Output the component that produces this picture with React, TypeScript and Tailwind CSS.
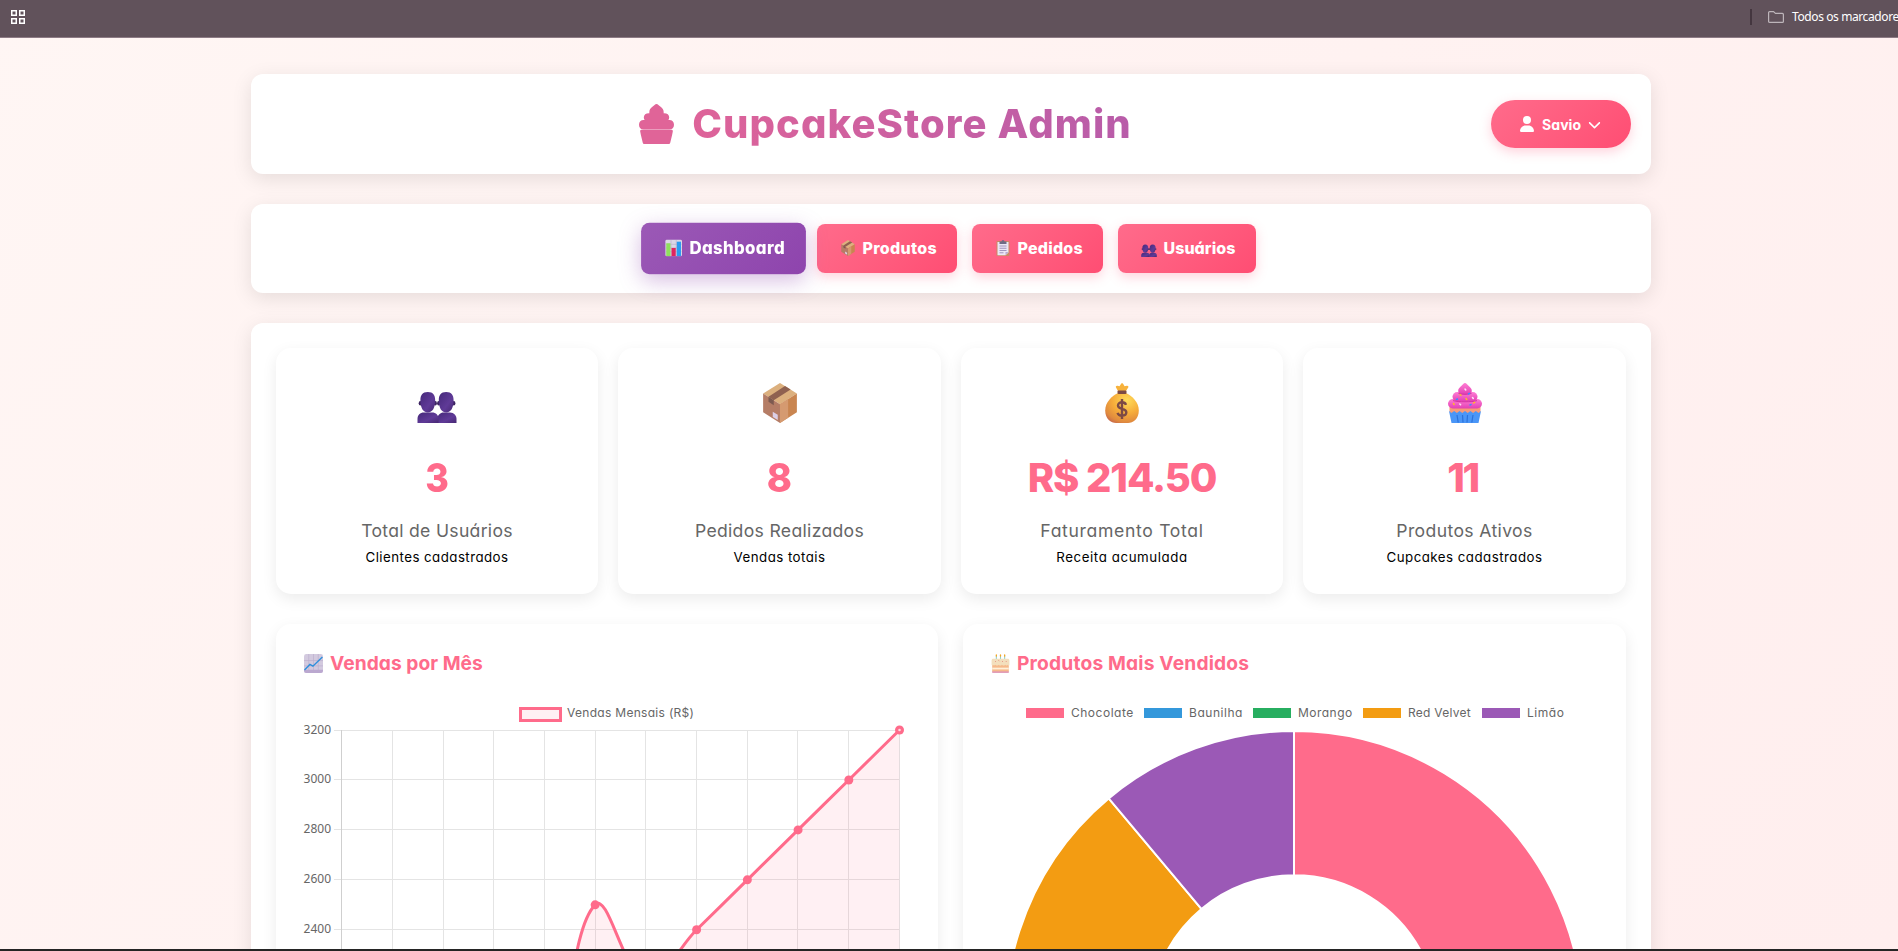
import type { ReactNode } from "react";
import { FaUser, FaChevronDown } from "react-icons/fa6";

type IconProps = { className?: string };

function ChartBars({ className }: IconProps) {
  return (
    <svg viewBox="0 0 32 32" className={className}>
      <rect x="0" y="0" width="32" height="32" rx="3" fill="#dcd7e6" />
      <path d="M1 9h30M1 16h30M1 23h30M11 1v30M21 1v30" stroke="#b9b0c9" strokeWidth="1.2" />
      <rect x="2" y="7" width="8" height="25" fill="#8fe05c" />
      <rect x="12" y="16" width="8" height="16" fill="#e0245e" />
      <rect x="22" y="4" width="8" height="28" fill="#2b9bf0" />
    </svg>
  );
}

function Package({ className }: IconProps) {
  return (
    <svg viewBox="0 0 32 32" className={className}>
      <path d="M16 0 29.500 8.300 16 17 2.500 8.300Z" fill="#dcb07e" />
      <path d="M2.500 8.300 16 17v15L2.500 23.400Z" fill="#b57d66" />
      <path d="M29.500 8.300 16 17v15l13.500-8.600Z" fill="#c98550" />
      <path d="M16 17l6.500-4.200v15L16 32Z" fill="#d59a70" />
      <path d="M20 2.400 24.500 5.200 11 13.700 6.800 11Z" fill="#8f6150" />
      <path d="M6.800 11 11 13.700v4L6.800 15Z" fill="#7d5a50" />
      <path d="M10.200 23l4 2.300v4.200l-4-2.300Z" fill="#dccfe6" />
    </svg>
  );
}

function Clipboard({ className }: IconProps) {
  return (
    <svg viewBox="0 0 32 32" className={className}>
      <rect x="3" y="2" width="26" height="30" rx="2" fill="#c98a63" />
      <path d="M5 4h22v21l-6 5.500H5Z" fill="#ece6f5" />
      <path d="M27 24h-6v6Z" fill="#b9a9cf" />
      <path d="M9 12h14M9 16.500h14M9 21h14M9 25.500h8" stroke="#9a8cb8" strokeWidth="1.8" />
      <path d="M9 3h4a3 3 0 0 1 6 0h4v5H9Z" fill="#6f6a86" />
    </svg>
  );
}

function People({ className }: IconProps) {
  return (
    <svg viewBox="0 0 40 40" className={className}>
      <defs>
        <linearGradient id="people" x1="0" y1="0" x2="1" y2="1">
          <stop offset="0" stopColor="#46297a" />
          <stop offset=".6" stopColor="#5f3a97" />
          <stop offset="1" stopColor="#472873" />
        </linearGradient>
      </defs>
      <g fill="#3d2462">
        <ellipse cx="3.300" cy="20.300" rx="1.600" ry="2.300" />
        <ellipse cx="18.300" cy="20.300" rx="1.600" ry="2.300" />
        <ellipse cx="21.700" cy="20.300" rx="1.600" ry="2.300" />
        <ellipse cx="36.800" cy="20.300" rx="1.600" ry="2.300" />
      </g>
      <g fill="url(#people)">
        <path d="M10.800 9c5.400 0 7.400 3 7.400 8.500 0 7-2.600 12-7.400 12s-7.400-5-7.400-12C3.400 12 5.400 9 10.800 9Z" />
        <path d="M29.200 9c5.400 0 7.400 3 7.400 8.500 0 7-2.600 12-7.400 12s-7.400-5-7.400-12C21.800 12 23.800 9 29.200 9Z" />
        <path d="M20.500 40v-5c0-3 3-5.500 6-5.500h6.500c4 0 6.500 3 6.500 6.500v4Z" />
        <path d="M.5 40v-4c0-4 2.500-6.500 6.500-6.500h8c4 0 6.500 2.500 6.500 6.500v4Z" />
      </g>
    </svg>
  );
}

function MoneyBag({ className }: IconProps) {
  return (
    <svg viewBox="0 0 40 40" className={className}>
      <defs>
        <radialGradient id="bag" cx=".65" cy=".25" r=".85">
          <stop offset="0" stopColor="#ffdc5a" />
          <stop offset=".5" stopColor="#f6ac3a" />
          <stop offset=".85" stopColor="#e08a3e" />
          <stop offset="1" stopColor="#c96a48" />
        </radialGradient>
      </defs>
      <path d="M16 8 14 4.500c-.6-1.200.4-2 1.500-1.700l2 .5L19.300.6c.4-.6 1.200-.6 1.600 0l1.700 2.700 2.300-.5c1.200-.2 1.900.8 1.300 1.800L24 8Z" fill="#f7b23c" />
      <path d="M16 10h8c6 3 12.800 9 12.800 17.500C36.800 36 31 40 26 40H14C9 40 3.200 36 3.200 27.500 3.200 19 10 13 16 10Z" fill="url(#bag)" />
      <rect x="15.500" y="7.500" width="9" height="3.600" rx="1" fill="#7c4a45" />
      <path d="M24 21.800c-.6-1.700-2.100-2.500-4-2.500-2.300 0-4 1.100-4 3.200 0 4.400 8.300 2.200 8.300 6.700 0 2.200-1.900 3.400-4.300 3.400-2.200 0-3.900-.9-4.500-2.800M20 16v20" stroke="#7c4a45" strokeWidth="2.400" fill="none" />
    </svg>
  );
}

function Cupcake({ className }: IconProps) {
  return (
    <svg viewBox="0 0 40 40" className={className}>
      <defs>
        <linearGradient id="frost" x1="0" y1="0" x2="0" y2="1">
          <stop offset="0" stopColor="#ff7ed4" />
          <stop offset="1" stopColor="#e23fb4" />
        </linearGradient>
      </defs>
      <path d="M4.500 24h31v5l-3 2h-25l-3-2Z" fill="#f79a78" />
      <path d="m4 28 2.500 2 2.700-2 2.700 2 2.700-2 2.700 2L20 28l2.700 2 2.700-2 2.700 2 2.700-2 2.700 2 2.500-2-2.500 12H6.500Z" fill="#4a96f7" />
      <path d="m12 32 1.200 7.500M17.500 32l.5 7.500M22.500 32l-.5 7.500M28 32l-1.200 7.500" stroke="#2b72dc" strokeWidth="1.200" />
      <g fill="url(#frost)">
        <rect x="3" y="16" width="34" height="9.500" rx="4.750" />
        <rect x="7.500" y="9" width="25" height="9.500" rx="4.700" />
        <path d="M20 0c1.500 0 2 1.500 3.500 2.800 2 1.700 3.300 3 3.300 5 0 2.500-3 3.700-6.800 3.700s-6.800-1.200-6.800-3.700c0-2 1.300-3.300 3.300-5C18 1.500 18.500 0 20 0Z" />
      </g>
      <path d="M8 17.600c5 1.600 19 1.600 24 0M13.500 10.400c3 1.200 10 1.200 13 0" stroke="#cf2fa0" strokeWidth=".9" fill="none" />
      <g strokeWidth="1.500" strokeLinecap="round">
        <path d="m15 11.500 1 .8M28.500 20l1.200-.6M8.500 20.500l.6 1M21 15.500l.8 1" stroke="#ffb52e" />
        <path d="m23.500 11 1-.6M11.500 16.500l1-.5M25 22l1-.4" stroke="#3d8bff" />
        <path d="m20 6 .8 1M14.800 21l.8.8M27.500 14.500l.8 1" stroke="#ffe1f6" />
      </g>
    </svg>
  );
}

function TrendUp({ className }: IconProps) {
  return (
    <svg viewBox="0 0 32 32" className={className}>
      <rect x="0" y="0" width="32" height="32" rx="4" fill="#d3cadf" />
      <path d="M0 28a4 4 0 0 0 4 4h24a4 4 0 0 0 4-4v-1.500H0Z" fill="#bba8d0" />
      <path d="M0 11h32M0 20h32M8 0v32M16 0v32M24 0v32" stroke="#b9adcb" strokeWidth="1" />
      <path d="M.8 27 10 17.500l5 3L31 5" fill="none" stroke="#2f8fdc" strokeWidth="2.400" />
    </svg>
  );
}

function Cake({ className }: IconProps) {
  return (
    <svg viewBox="0 0 32 32" className={className}>
      <path d="M9 3v7M16 3v7M23 3v7" stroke="#8fcfc6" strokeWidth="1.800" />
      <path d="M9 1.500v2M16 1.500v2M23 1.500v2" stroke="#f5a623" strokeWidth="2.200" strokeLinecap="round" />
      <rect x="2" y="15" width="28" height="16.500" rx="2" fill="#f6b98b" />
      <path d="M2 23h28v3H2Z" fill="#fff0d9" />
      <path d="M2 29.500h28v2H2Z" fill="#d98cc0" />
      <path d="M1 11c0-2 1-3 3-3h24c2 0 3 1 3 3v7c0 2-2 2-2.500 0-.5 1.800-4 1.800-4.500 0-.5 1.800-5 1.800-5.500 0-.5 1.800-5 1.800-5.500 0-.5 1.800-5 1.800-5.500 0-.5 1.500-6.500 1.500-6.500 0Z" fill="#f3dfbd" />
      <path d="m7 12 1 1M13 11l1 1M19 13l1-1M25 12l1 1" stroke="#e0605c" strokeWidth="1.500" />
    </svg>
  );
}

function CupcakeSilhouette({ className }: IconProps) {
  return (
    <svg viewBox="0 0 35 40" className={className} fill="#e06498">
      <path d="M17.500 0c1.500 0 2.400 1.500 3.800 2.600 2.200 1.700 3.400 3.200 3.400 5.600 0 .4 0 .7-.1 1h.6c3 0 5 1.600 5 4.200 0 1-.3 1.800-.8 2.500h.9c2.900 0 4.700 1.900 4.700 4.800 0 2.800-1.800 4.700-4.700 4.900H4.700C1.800 25.400 0 23.500 0 20.700c0-2.900 1.800-4.800 4.700-4.800h.9c-.5-.7-.8-1.500-.8-2.500 0-2.600 2-4.200 5-4.200h.6c-.1-.3-.1-.6-.1-1 0-2.400 1.200-3.900 3.400-5.600C15.100 1.500 16 0 17.500 0Z" />
      <path d="M2.400 25.700h30.200c.9 0 1.400.8 1.200 1.700l-.7 3.600-1.800 7.500c-.2 1-.9 1.500-1.900 1.500H5.600c-1 0-1.700-.5-1.900-1.500L1.900 31l-.7-3.600c-.2-.9.300-1.700 1.200-1.700Z" />
    </svg>
  );
}

const panel = "bg-white rounded-xl shadow-[0_5px_20px_rgba(0,0,0,0.1)]";
const card = "bg-white rounded-[15px] shadow-[0_5px_15px_rgba(0,0,0,0.08)]";

function BookmarksBar() {
  return (
    <div className="h-[38px] shrink-0 bg-[#61525b] border-b border-[#8d7b85] flex items-start overflow-hidden">
      <svg viewBox="0 0 14 14" className="w-3.5 h-3.5 ml-[11px] mt-2.5" fill="none" stroke="#fff" strokeWidth="1.500">
        <rect x=".75" y=".75" width="4.500" height="4.500" />
        <rect x="8.750" y=".75" width="4.500" height="4.500" />
        <rect x=".75" y="8.750" width="4.500" height="4.500" />
        <rect x="8.750" y="8.750" width="4.500" height="4.500" />
      </svg>
      <div className="ml-auto w-[148px] flex items-start whitespace-nowrap">
        <div className="w-0.5 h-4 mt-[9px] bg-[#44363f] shrink-0" />
        <svg viewBox="0 0 16 12" className="w-4 h-3 ml-4 mt-[11px] shrink-0" fill="none" stroke="#bdb5ba" strokeWidth="1.200" strokeLinejoin="round">
          <path d="M.6 10.400V1.600c0-.6.4-1 1-1h4l1.800 1.800h7c.6 0 1 .4 1 1v7c0 .6-.4 1-1 1H1.600c-.6 0-1-.4-1-1Z" />
        </svg>
        <span className="ml-2 mt-[7px] leading-5 text-[12px] text-white font-['Noto_Sans',sans-serif] tracking-[-0.4px]">Todos os marcadore</span>
      </div>
    </div>
  );
}

function NavButton({ icon, width, active, children }: { icon: ReactNode; width: string; active?: boolean; children: ReactNode }) {
  const look = active
    ? "scale-105 bg-linear-135 from-[#9b59b6] to-[#8e44ad] shadow-[0_6px_20px_rgba(155,89,182,0.4)]"
    : "bg-linear-135 from-[#ff6b8b] to-[#ff4d73] shadow-[0_4px_12px_rgba(255,107,139,0.3)]";
  return (
    <button className={`${width} ${look} h-[49px] pb-px rounded-lg pl-[23px] flex items-center gap-[7px] text-white text-[16px] font-extrabold whitespace-nowrap`}>
      {icon}
      {children}
    </button>
  );
}

function StatCard({ icon, value, label, note }: { icon: ReactNode; value: ReactNode; label: ReactNode; note: ReactNode }) {
  return (
    <div className={`${card} h-[246px] pt-[35px] flex flex-col items-center whitespace-nowrap`}>
      {icon}
      <div className="mt-[25px] h-[60px] leading-[60px] text-[40px] font-extrabold text-[#ff6b8b]">{value}</div>
      <div className="mt-2.5 h-[26px] leading-[26px] text-[17.6px] text-[#666]">{label}</div>
      <div className="mt-[3px] h-5 leading-5 text-[13.3px] text-black">{note}</div>
    </div>
  );
}

const STEP = 50.73;
const X0 = 37.5;
const values = [1200, 1900, 1500, 2200, 1800, 2500, 2200, 2400, 2600, 2800, 3000, 3200];
const pts = values.map((v, i) => ({ x: X0 + i * STEP, y: 6 + ((3200 - v) / 200) * 49.95 }));

function smoothPath() {
  const ctrl = pts.map((p, i) => {
    const a = pts[i - 1] ?? p;
    const b = pts[i + 1] ?? p;
    const d1 = Math.hypot(p.x - a.x, p.y - a.y);
    const d2 = Math.hypot(b.x - p.x, b.y - p.y);
    const f1 = (0.4 * d1) / (d1 + d2);
    const f2 = (0.4 * d2) / (d1 + d2);
    const dx = b.x - a.x;
    const dy = b.y - a.y;
    return { inX: p.x - f1 * dx, inY: p.y - f1 * dy, outX: p.x + f2 * dx, outY: p.y + f2 * dy };
  });
  return pts
    .map((p, i) => (i === 0 ? `M${p.x} ${p.y}` : `C${ctrl[i - 1].outX} ${ctrl[i - 1].outY} ${ctrl[i].inX} ${ctrl[i].inY} ${p.x} ${p.y}`))
    .join("");
}

function SalesChart() {
  const line = smoothPath();
  const last = pts[pts.length - 1];
  const rows = [6.5, 55.5, 105.5, 155.5, 205.5];
  const cols = [88.5, 139.5, 189.5, 240.5, 291.5, 341.5, 392.5, 443.5, 493.5, 544.5, 595.5];
  return (
    <svg viewBox="0 0 606 225" className="w-[606px] h-[225px] shrink-0 overflow-visible">
      {rows.map((y, i) => (
        <g key={y}>
          <path d={`M30 ${y}H595.500`} stroke="#e4e4e4" />
          <text x="-0.4" y={y + 3} fontSize="12" fill="#666" className="font-['Noto_Sans',sans-serif]">{3200 - i * 200}</text>
        </g>
      ))}
      {cols.map((x) => (
        <path key={x} d={`M${x} 6V225`} stroke="#e4e4e4" />
      ))}
      <path d="M37.500 6V225" stroke="#cfcfcf" />
      <path d={`${line}V500H${X0}Z`} fill="#ff6b8b" fillOpacity=".1" />
      <path d={line} fill="none" stroke="#ff6b8b" strokeWidth="3" />
      {pts.map((p) => (
        <circle key={p.x} cx={p.x} cy={p.y} r="4.500" fill="#ff6b8b" />
      ))}
      <circle cx={last.x} cy={last.y} r="1.300" fill="#ffd9e1" />
    </svg>
  );
}

const slices = [
  { share: 35, color: "#ff6b8b" },
  { share: 20, color: "#3498db" },
  { share: 16, color: "#27ae60" },
  { share: 17.9, color: "#f39c12" },
  { share: 11.1, color: "#9b59b6" },
];

function ProductsChart() {
  const cx = 303;
  const cy = 295.5;
  const R = 288.5;
  const r = 144.2;
  let angle = 0;
  const at = (radius: number, a: number) => `${cx + radius * Math.sin(a)} ${cy - radius * Math.cos(a)}`;
  return (
    <svg viewBox="0 0 606 225" className="w-[606px] h-[225px] shrink-0 overflow-hidden">
      {slices.map((s) => {
        const a = angle;
        const b = (angle += (s.share / 100) * Math.PI * 2);
        return (
          <path
            key={s.color}
            d={`M${at(R, a)}A${R} ${R} 0 0 1 ${at(R, b)}L${at(r, b)}A${r} ${r} 0 0 0 ${at(r, a)}Z`}
            fill={s.color}
            stroke="#fff"
            strokeWidth="2"
            strokeLinejoin="bevel"
          />
        );
      })}
    </svg>
  );
}

function LegendItem({ box, width, children }: { box: string; width: string; children: ReactNode }) {
  return (
    <div className={`${width} flex items-center gap-[7px] shrink-0`}>
      <span className={`${box} w-[38px] h-2.5 shrink-0`} />
      {children}
    </div>
  );
}

export default function App() {
  return (
    <div className="w-[1898px] h-[951px] overflow-hidden flex flex-col bg-linear-135 from-[#fff6f4] to-[#ffeeee] font-['Inter',sans-serif] [font-feature-settings:'cv11']">
      <BookmarksBar />
      <div className="flex-1 min-h-0 overflow-hidden pl-[251px] pt-9">
        <div className="w-[1400px] flex flex-col">
          <header className={`${panel} h-[100px] px-5 flex items-center`}>
            <h1 className="flex-1 pl-[9px] flex items-center justify-center gap-[18px] text-[40px] leading-[60px] font-extrabold whitespace-nowrap">
              <CupcakeSilhouette className="w-[35px] h-10" />
              <span className="bg-linear-to-r from-[#de6399] to-[#b85ca9] bg-clip-text text-transparent tracking-[0.027em]">CupcakeStore Admin</span>
            </h1>
            <button className="w-[140px] h-12 rounded-full pl-[29px] flex items-center bg-linear-135 from-[#ff6b8b] to-[#ff4d73] shadow-[0_4px_12px_rgba(255,107,139,0.3)] text-white text-[14px] font-bold">
              <FaUser className="w-3.5 h-4" />
              <span className="ml-2 tracking-[0.005em]">Savio</span>
              <FaChevronDown className="ml-[7px] w-[13px] h-[13px]" />
            </button>
          </header>

          <nav className={`${panel} mt-[30px] h-[89px] pr-0.5 flex items-center justify-center gap-[15px]`}>
            <NavButton active width="w-[157px]" icon={<ChartBars className="w-4 h-4" />}>
              <span className="tracking-[0.022em]">Dashboard</span>
            </NavButton>
            <NavButton width="w-[140px]" icon={<Package className="w-4 h-4" />}>
              <span className="tracking-[0.02em]">Produtos</span>
            </NavButton>
            <NavButton width="w-[131px]" icon={<Clipboard className="w-4 h-4" />}>
              <span className="tracking-[0.012em]">Pedidos</span>
            </NavButton>
            <NavButton width="w-[138px]" icon={<People className="w-4 h-4 mt-px" />}>
              <span className="tracking-[0.003em]">Usuários</span>
            </NavButton>
          </nav>

          <main className={`${panel} mt-[30px] p-[25px] pb-10`}>
            <section className="grid grid-cols-[322px_323px_322px_323px] gap-5">
              <StatCard
                icon={<People className="w-10 h-10" />}
                value={<span className="inline-block scale-x-90">3</span>}
                label={<span className="tracking-[0.017em]">Total de Usuários</span>}
                note={<span className="tracking-[0.034em]">Clientes cadastrados</span>}
              />
              <StatCard
                icon={<Package className="w-10 h-10" />}
                value={<span className="inline-block scale-x-95">8</span>}
                label={<span className="tracking-[0.018em]">Pedidos Realizados</span>}
                note={<span className="tracking-[0.034em]">Vendas totais</span>}
              />
              <StatCard
                icon={<MoneyBag className="w-10 h-10" />}
                value={<span className="tracking-[-0.028em]">R$ 214.50</span>}
                label={<span className="tracking-[0.038em]">Faturamento Total</span>}
                note={<span className="tracking-[0.044em]">Receita acumulada</span>}
              />
              <StatCard
                icon={<Cupcake className="w-10 h-10" />}
                value={<span className="inline-block -ml-1 tracking-[-0.06em]">11</span>}
                label={<span className="tracking-[0.021em]">Produtos Ativos</span>}
                note={<span className="tracking-[0.036em]">Cupcakes cadastrados</span>}
              />
            </section>

            <section className="mt-[30px] grid grid-cols-[662px_663px] gap-[25px]">
              <div className={`${card} h-[420px] px-7 pt-6 flex flex-col`}>
                <h2 className="h-[30px] flex items-center gap-[7px] text-[19.2px] font-bold text-[#ff6b8b] whitespace-nowrap">
                  <TrendUp className="w-[19px] h-[19px]" />
                  <span className="tracking-[0.002em]">Vendas por Mês</span>
                </h2>
                <div className="mt-[26px] h-5 shrink-0 pl-[215px] flex items-center text-[12px] leading-5 text-[#666] whitespace-nowrap">
                  <span className="w-[43px] h-[15px] border-[3px] border-[#ff6b8b] bg-[#fff0f3]" />
                  <span className="ml-[5px] -mt-0.5 tracking-[0.025em]">Vendas Mensais (R$)</span>
                </div>
                <SalesChart />
              </div>
              <div className={`${card} h-[420px] px-7 pt-6 flex flex-col`}>
                <h2 className="h-[30px] flex items-center gap-[7px] text-[19.2px] font-bold text-[#ff6b8b] whitespace-nowrap">
                  <Cake className="w-[19px] h-[19px]" />
                  <span className="tracking-[0.009em]">Produtos Mais Vendidos</span>
                </h2>
                <div className="mt-[25px] mb-px h-5 shrink-0 pl-[35px] flex items-center text-[12px] leading-5 text-[#666] whitespace-nowrap">
                  <LegendItem width="w-[118px]" box="bg-[#ff6b8b]"><span className="tracking-[0.042em]">Chocolate</span></LegendItem>
                  <LegendItem width="w-[109px]" box="bg-[#3498db]"><span className="tracking-[0.045em]">Baunilha</span></LegendItem>
                  <LegendItem width="w-[110px]" box="bg-[#27ae60]"><span className="tracking-[0.04em]">Morango</span></LegendItem>
                  <LegendItem width="w-[119px]" box="bg-[#f39c12]"><span className="tracking-[0.022em]">Red Velvet</span></LegendItem>
                  <LegendItem width="w-[90px]" box="bg-[#9b59b6]"><span className="tracking-[0.045em]">Limão</span></LegendItem>
                </div>
                <ProductsChart />
              </div>
            </section>
          </main>
        </div>
      </div>
      <div className="h-0.5 shrink-0 bg-[#242424]" />
    </div>
  );
}
